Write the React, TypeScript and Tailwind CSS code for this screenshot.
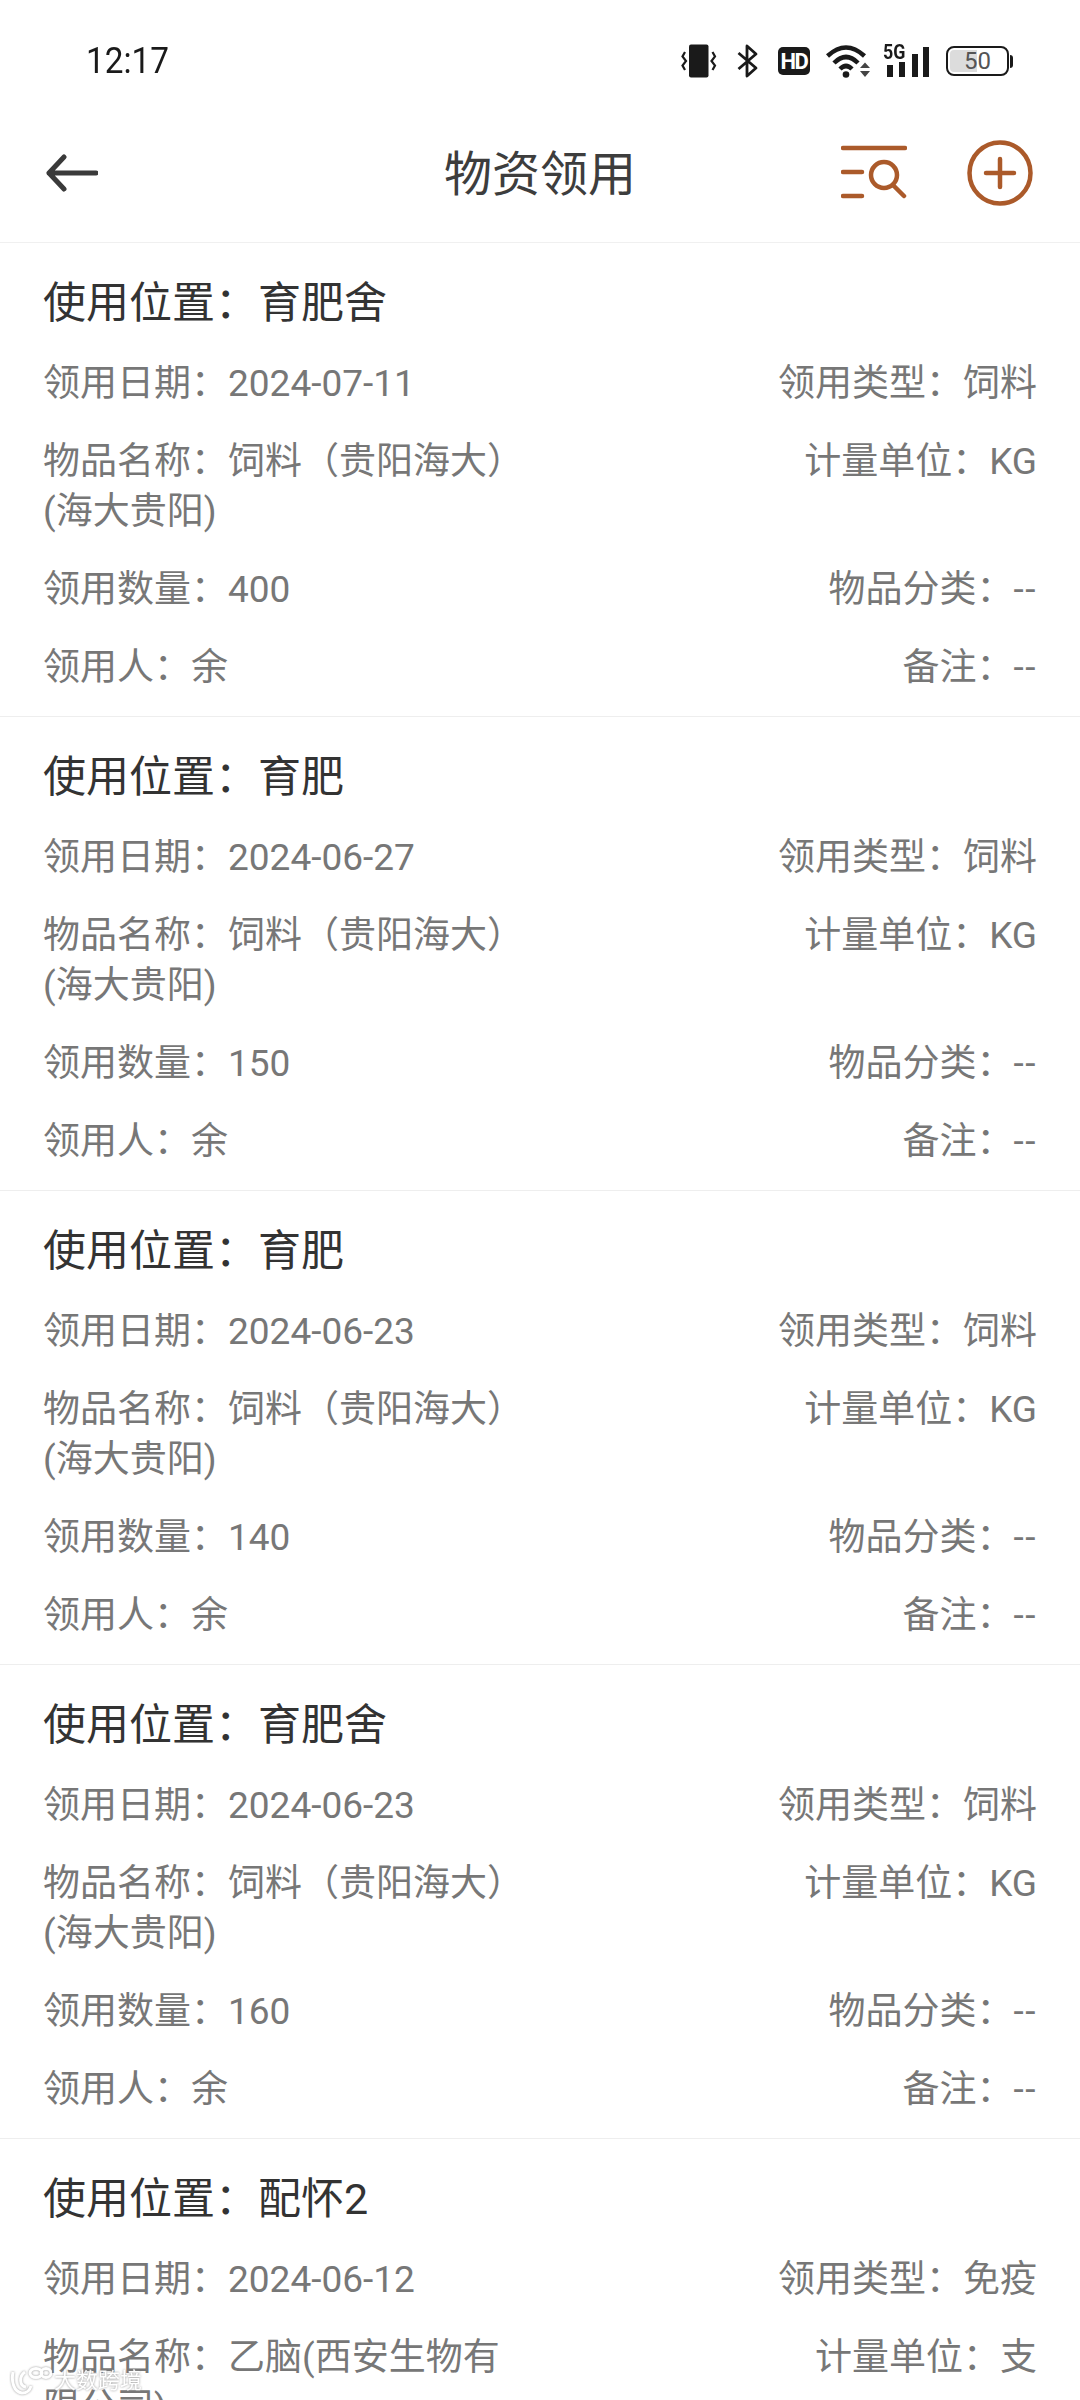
const FONT = "font-['Roboto','Noto_Sans_CJK_SC',sans-serif]";

type Rec = {
  place: string;
  date: string;
  type: string;
  name: string;
  unit: string;
  qty?: string;
};

const RECORDS: Rec[] = [
  { place: "育肥舍", date: "2024-07-11", type: "饲料", name: "饲料（贵阳海大）(海大贵阳)", unit: "KG", qty: "400" },
  { place: "育肥", date: "2024-06-27", type: "饲料", name: "饲料（贵阳海大）(海大贵阳)", unit: "KG", qty: "150" },
  { place: "育肥", date: "2024-06-23", type: "饲料", name: "饲料（贵阳海大）(海大贵阳)", unit: "KG", qty: "140" },
  { place: "育肥舍", date: "2024-06-23", type: "饲料", name: "饲料（贵阳海大）(海大贵阳)", unit: "KG", qty: "160" },
  { place: "配怀2", date: "2024-06-12", type: "免疫", name: "乙脑(西安生物有限公司)", unit: "支" },
];

function StatusIcons() {
  return (
    <div className="flex items-center text-[#1a1a1a]">
      {/* vibrate */}
      <svg width="36" height="34" viewBox="0 0 36 34" className="mr-[20px]">
        <rect x="8" y="0.5" width="19.5" height="33" rx="2" fill="currentColor" />
        <path d="M4 8 L1.5 12.5 L5 17 L1.5 21.5 L4 26" stroke="currentColor" strokeWidth="2.2" fill="none" />
        <path d="M31.5 8 L34 12.5 L30.5 17 L34 21.5 L31.5 26" stroke="currentColor" strokeWidth="2.2" fill="none" />
      </svg>
      {/* bluetooth */}
      <svg width="22" height="34" viewBox="0 0 22 34" className="mr-[19px]">
        <path d="M1.5 9 L19 24 L10 32 L10 2 L19 10 L1.5 25" stroke="currentColor" strokeWidth="2.8" fill="none" strokeLinejoin="round" />
      </svg>
      <div className="mr-[16px] flex h-[28px] w-[32px] items-center justify-center rounded-[5px] bg-[#1a1a1a] font-['Roboto',sans-serif] text-[22px] font-bold tracking-[-1.5px] text-white">
        HD
      </div>
      {/* wifi */}
      <svg width="44" height="34" viewBox="0 0 44 34" className="mr-[13px]">
        <path d="M1.5 12 Q20 -5 38.5 12" stroke="currentColor" strokeWidth="4.5" fill="none" />
        <path d="M8 19 Q20 7 32 19" stroke="currentColor" strokeWidth="4.5" fill="none" />
        <path d="M14 25 Q20 19 26 25" stroke="currentColor" strokeWidth="4.5" fill="none" />
        <circle cx="20" cy="30.5" r="3.3" fill="currentColor" />
        <path d="M34 24 L39 18.5 L44 24 Z M34 27 L44 27 L39 33 Z" fill="#444" />
      </svg>
      {/* 5G signal */}
      <div className="relative mr-[16px] h-[32px] w-[47px]">
        <span className="absolute left-0 top-[-2px] origin-left scale-x-[0.85] font-['Roboto',sans-serif] text-[21px] font-bold leading-[18px]">5G</span>
        <div className="absolute bottom-0 left-[4px] h-[12px] w-[6px] bg-[#1a1a1a]" />
        <div className="absolute bottom-0 left-[16px] h-[15px] w-[6px] bg-[#1a1a1a]" />
        <div className="absolute bottom-0 left-[29px] h-[23px] w-[6px] bg-[#1a1a1a]" />
        <div className="absolute bottom-0 left-[40px] h-[30px] w-[6px] bg-[#1a1a1a]" />
      </div>
      {/* battery */}
      <div className="relative flex h-[30px] w-[63px] items-center justify-center overflow-hidden rounded-[8px] border-[2px] border-[#1a1a1a]">
        <div className="absolute inset-y-[2px] left-[2px] w-[27px] rounded-l-[4px] bg-[#dcdcdc]" />
        <span className="relative font-['Roboto',sans-serif] text-[24px] leading-none text-[#555555]">50</span>
      </div>
      <div className="ml-[1px] h-[13px] w-[3px] rounded-r bg-[#1a1a1a]" />
    </div>
  );
}

function Dash() {
  return <span className="tracking-[1.5px]">--</span>;
}

function RecordCard({ rec }: { rec: Rec }) {
  return (
    <div className="border-b border-[#eeeeee] px-[43px] pb-[23px] pt-[30px]">
      <div className="h-[60px] text-[43px] leading-[60px] text-[#333333]">使用位置：{rec.place}</div>
      <div className="mt-[26px] flex flex-col gap-[28px] text-[37px] leading-[50px] text-[#777777]">
        <div className="flex justify-between">
          <span>领用日期：{rec.date}</span>
          <span>领用类型：{rec.type}</span>
        </div>
        <div className="flex justify-between">
          <span className="w-[490px]">物品名称：{rec.name}</span>
          <span>计量单位：{rec.unit}</span>
        </div>
        <div className="flex justify-between">
          <span>领用数量：{rec.qty ?? "--"}</span>
          <span>物品分类：<Dash /></span>
        </div>
        <div className="flex justify-between">
          <span>领用人：余</span>
          <span>备注：<Dash /></span>
        </div>
      </div>
    </div>
  );
}

export default function App() {
  return (
    <div className={`relative h-[2400px] w-[1080px] overflow-hidden bg-white ${FONT}`}>
      <div className="flex h-[98px] items-center justify-between pl-[86px] pr-[67px] pt-[24px]">
        <span className="origin-left scale-x-[0.9] text-[37px] leading-[44px] text-[#1a1a1a]">12:17</span>
        <StatusIcons />
      </div>

      <div className="relative flex h-[145px] items-center justify-between border-b border-[#f0f0f0] pl-[46px] pr-[47px] pt-[5px]">
        <svg width="52" height="38" viewBox="0 0 52 38" className="text-[#3a3a3a]">
          <path d="M50 19 H3 M18 3 L3 19 L18 35" stroke="currentColor" strokeWidth="5" strokeLinecap="round" strokeLinejoin="round" fill="none" />
        </svg>
        <div className="absolute left-[444px] top-[9px] text-[48px] leading-[136px] text-[#3d3d3d]">物资领用</div>
        <div className="flex items-center gap-[60px]">
          <svg width="66" height="56" viewBox="0 0 66 56" className="text-[#ab5a2a]">
            <g stroke="currentColor" strokeWidth="4.5" strokeLinecap="round" fill="none">
              <path d="M2 3 H64 M2 27 H21 M2 51 H21" />
              <circle cx="43" cy="30" r="13" />
              <path d="M53 41 L63 51" />
            </g>
          </svg>
          <svg width="66" height="66" viewBox="0 0 66 66" className="text-[#ab5a2a]">
            <circle cx="33" cy="33" r="30.5" stroke="currentColor" strokeWidth="4.5" fill="none" />
            <path d="M19 33 H47 M33 19 V47" stroke="currentColor" strokeWidth="4.5" strokeLinecap="round" />
          </svg>
        </div>
      </div>

      {RECORDS.map((r, i) => (
        <RecordCard key={i} rec={r} />
      ))}

      {/* watermark */}
      <div className="absolute bottom-[4px] left-[10px] flex items-center gap-[2px] text-white opacity-90 drop-shadow-[0_0_1px_#8a8a8a]">
        <svg width="42" height="30" viewBox="0 0 42 30" fill="none" stroke="currentColor" strokeWidth="3">
          <path d="M3 6 C1 16 4 26 12 27 C17 27 20 24 21 20" />
          <path d="M15 6 C9 10 9 20 16 21" />
          <ellipse cx="26" cy="7" rx="6" ry="4.5" />
          <ellipse cx="36" cy="7" rx="5" ry="4.5" />
        </svg>
        <span className="text-[22px] leading-none">大数跨境</span>
      </div>
    </div>
  );
}
